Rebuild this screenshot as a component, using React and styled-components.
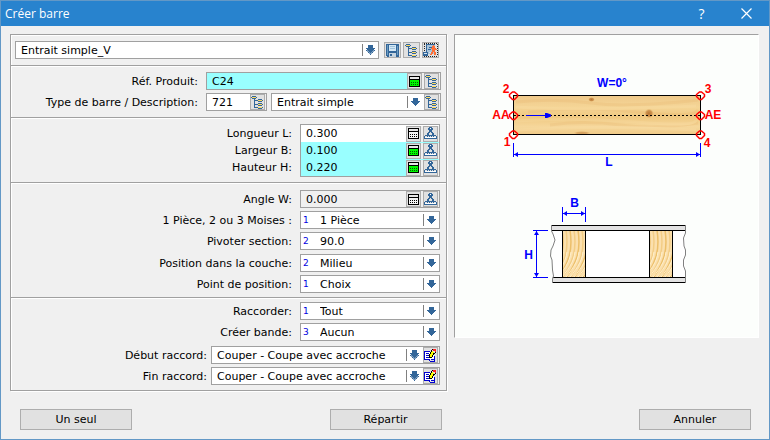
import React from "react";
import styled, { createGlobalStyle, css } from "styled-components";

const LINE = "#a0a0a0";
const FACE = "#f0f0f0";
const CYAN = "#99ffff";
const STEEL = "#336699";

const GlobalStyle = createGlobalStyle`
  *, *::before, *::after { box-sizing: border-box; }
  body { margin: 0; background: ${FACE}; }
  body, button, input, select {
    font-family: "DejaVu Sans", Verdana, sans-serif;
    font-size: 11px;
    color: #000;
  }
`;

const Dialog = styled.main`
  min-height: 100vh;
  display: flex;
  flex-direction: column;
  background: ${FACE};
  border: 1px solid #6398c6;
`;

const TitleBar = styled.header`
  height: 25px;
  display: flex;
  align-items: center;
  padding-left: 4px;
  background: #2883ce;
  color: #fff;
`;

const Title = styled.h1`
  flex: 1;
  margin: 0;
  font: 400 12px/24px "Open Sans", "Segoe UI", sans-serif;
`;

const CaptionButton = styled.button`
  width: 45px;
  height: 25px;
  padding: 0;
  border: 0;
  background: transparent;
  color: #fff;
  display: grid;
  place-items: center;
  font: 400 14px/24px "Open Sans", "Segoe UI", sans-serif;
`;

const Content = styled.div`
  display: grid;
  grid-template-columns: minmax(0, 437fr) minmax(0, 305fr);
  column-gap: 7px;
  align-items: start;
  padding: 8px 10px 0 9px;
`;

const Form = styled.form`
  border: 1px solid ${LINE};
  border-bottom: 0;
  box-shadow: 1px 1px 0 #fff;
`;

const Section = styled.section`
  display: flex;
  flex-direction: column;
  gap: 3px;
  padding: ${(p) => p.$pad};
  border-bottom: 1px solid ${LINE};
  box-shadow: inset 1px 1px 0 #fff;
`;

const Group = styled.div`
  display: flex;
  flex-direction: column;
  gap: 3px;
  margin-top: ${(p) => p.$space || 0}px;
`;

const Row = styled.div`
  display: flex;
  align-items: center;

  > label {
    padding-top: 2px;
  }
`;

const Label = styled.label`
  flex: 1;
  padding-right: ${(p) => (p.$tight ? 4 : 8)}px;
  text-align: right;
  line-height: 16px;
  white-space: nowrap;
`;

const control = css`
  flex: 1;
  min-width: 0;
  width: 0;
  height: 16px;
  margin: 0;
  padding: 0 0 0 ${(p) => (p.$indent === undefined ? 5 : p.$indent)}px;
  border: 0;
  border-radius: 0;
  outline: 0;
  background: transparent;
`;

const TextInput = styled.input`
  ${control}
`;

const Select = styled.select`
  ${control}
  appearance: none;
`;

const Frame = styled.div`
  display: flex;
  align-items: center;
  height: 18px;
  border: 1px solid ${LINE};
  background: ${(p) => p.$fill || "#fff"};
  ${(p) => (p.$width ? css`flex: none; width: ${p.$width}px;` : css`flex: 1; min-width: 0;`)}

  ${TextInput}, ${Select} {
    padding-top: 1px;
  }
`;

const Stack = styled.div`
  width: 140px;
  border: 1px solid ${LINE};
`;

const StackRow = styled.div`
  display: flex;
  align-items: center;
  height: 17px;
  background: ${(p) => p.$fill || "#fff"};
`;

const StackLabels = styled.div`
  flex: 1;
  display: flex;
  flex-direction: column;
  gap: 1px;
`;

const Pair = styled.div`
  display: flex;
  gap: 4px;
  width: 235px;
`;

const Code = styled.span`
  width: 19px;
  padding-left: 2px;
  color: #0000e0;
  font-size: 9px;
  line-height: 14px;
`;

const ArrowCell = styled.span`
  flex: none;
  width: 16px;
  height: 12px;
  padding: 0 3px;
  border-left: 1px solid #808080;
  display: flex;
  align-items: center;
  pointer-events: none;
`;

const Tools = styled.span`
  flex: none;
  display: flex;
  align-items: center;
  gap: 2px;
  height: 16px;
  padding-right: 1px;
  margin-left: 1px;
  background: ${FACE};
`;

const Toolbar = styled.div`
  display: flex;
  gap: 2px;
  margin-left: 5px;
`;

const ToolButton = styled.button`
  flex: none;
  width: ${(p) => (p.$large ? 17 : 15)}px;
  height: 16px;
  padding: 0;
  border: 1px solid #adadad;
  background: #e1e1e1;
  display: grid;
  place-items: center;
  svg { display: block; }
`;

const Preview = styled.figure`
  margin: 0;
  border: 1px solid #fff;
  border-top-color: ${LINE};
  border-left-color: ${LINE};
  background: #fcfefc;
  svg { display: block; width: 100%; height: auto; }
`;

const Footer = styled.footer`
  display: flex;
  justify-content: space-between;
  padding: 18px 18px 9px 19px;
`;

const PushButton = styled.button`
  width: 112px;
  height: 21px;
  padding: 0;
  border: 1px solid #adadad;
  background: #e1e1e1;
`;

function Pixels({ size = 13, h, children }) {
  return (
    <svg width={size} height={h || size} viewBox={`0 0 ${size} ${h || size}`} shapeRendering="crispEdges" aria-hidden="true">
      {children}
    </svg>
  );
}

const Arrow = ({ double }) => (
  <ArrowCell>
    <Pixels size={9} h={10}>
      {double ? (
        <>
          <path fill="#7fa0c0" d="M0 5h9v1H8v1H7v1H6v1H5v1H4V9H3V8H2V7H1V6H0z" />
          <path fill={STEEL} d="M2 0h5v3h2v1H8v1H7v1H6v1H5v1H4V7H3V6H2V5H1V4H0V3h2z" />
          <path fill={STEEL} d="M0 5h1v1H0zM8 5h1v1H8zM2 7h1v1H2zM6 7h1v1H6zM4 9h1v1H4z" />
        </>
      ) : (
        <path fill={STEEL} d="M2 1h5v3h2v1H8v1H7v1H6v1H5v1H4V8H3V7H2V6H1V5H0V4h2z" />
      )}
    </Pixels>
  </ArrowCell>
);

const TreeIcon = () => (
  <Pixels>
    <path fill={STEEL} d="M1 0h4v1H1zM0 1h1v1H0zM5 1h1v1H5zM1 2h4v1H1zM3 3h1v9H3zM4 4h3v1H4zM4 8h3v1H4zM4 11h3v1H4zM7 3h4v1H7zM11 4h1v1h-1zM7 5h4v1H7zM7 7h4v1H7zM11 8h1v1h-1zM7 9h4v1H7zM11 11h1v1h-1zM7 12h4v1H7z" />
    <path fill="#ffd95c" d="M1 1h4v1H1zM7 4h4v1H7zM7 8h4v1H7zM7 11h4v1H7z" />
  </Pixels>
);

const CalcIcon = ({ on }) => (
  <Pixels>
    <path d="M1 1h11v11H1z" fill="#000" />
    <path d="M2 2h9v2H2z" fill="#e8e8e8" />
    <path d="M2 5h9v6H2z" fill={on ? "#00f800" : "#f4f4f4"} />
    <path
      d="M3 7h1v1H3zM5 7h1v1H5zM7 7h1v1H7zM9 7h1v1H9zM3 9h1v1H3zM5 9h1v1H5zM7 9h1v1H7zM9 9h1v1H9z"
      fill={on ? "#006000" : "#000"}
    />
  </Pixels>
);

const CompassIcon = () => (
  <Pixels>
    <path fill={STEEL} d="M5 0h3v1H5zM4 1h5v2H4zM5 3h3v1H5zM5 4h3v1H5zM4 5h2v1H4zM7 5h2v1H7zM3 6h2v1H3zM8 6h2v1H8zM3 7h2v1H3zM8 7h2v1H8zM1 8h11v1H1zM0 9h1v3H0zM12 9h1v3h-1zM1 11h11v1H1zM3 9h1v1H3zM5 9h1v1H5zM7 9h1v1H7zM9 9h1v1H9z" />
    <path fill="#fff" d="M1 10h11v1H1zM6 1h1v1H6z" />
  </Pixels>
);

const SaveIcon = () => (
  <Pixels>
    <path fill={STEEL} d="M0 0h12l1 1v12H1l-1-1z" />
    <path fill="#d5e8f5" d="M3 1h7v6H3z" />
    <path fill="#9fc3dc" d="M4 2h5v1H4zM4 4h5v1H4z" />
    <path fill="#c5d4e0" d="M3 9h7v4H3z" />
    <path fill={STEEL} d="M4 10h2v2H4z" />
    <path fill="#6d9cc0" d="M1 1h1v10H1zM11 2h1v9h-1z" />
  </Pixels>
);

const ExportIcon = () => (
  <Pixels size={15} h={14}>
    <path fill="none" stroke="#222" strokeDasharray="1 1" d="M1 .5h13M1.500 1v12M14.500 1v12M1 13.500h13" />
    <path fill="#a9c3d8" d="M3 1h9v10H3z" />
    <path fill={STEEL} d="M3 1h9v1H3zM3 2h1v8H3zM0 9h5v4H0zM6 4h4v1H6zM5 6h3v1H5z" />
    <path fill="#d5e3ee" d="M1 10h3v1H1zM6 9h2v1H6z" />
    <path fill="#ff6f35" d="M10 2h1v1h1v2h1v1h1v1h-2v2h1v3h-2V9h-1v2H9v1H7v-1h1V9h1V6H8V5h1V3h1z" />
  </Pixels>
);

const EditIcon = () => (
  <Pixels>
    <path fill="#fff" d="M0 3h10v8H0z" />
    <path fill="#0000d0" d="M0 2h6v1H0zM0 2h1v9H0zM2 4h3v1H2zM2 6h3v1H2zM2 8h3v1H2zM0 10h6v1H0zM5 11h1v1H5zM6 12h5v1H6zM10 7h1v6h-1zM7 10h3v1H7z" />
    <path fill="#000" d="M8 0h3v1H8zM7 1h1v2H7zM6 3h1v2H6zM5 5h1v4H5zM6 8h2v1H6zM8 6h1v2H8zM9 4h1v2H9zM11 3h1v1h-1zM10 4h1v1h-1z" />
    <path fill="#ffff00" d="M8 2h1v1h1v1H9v2H8v2H6V5h1V3h1z" />
    <path fill="#ff2020" d="M9 0h3v3h-1V2H9z" />
  </Pixels>
);

const Tree = () => (
  <ToolButton type="button" aria-label="Sélection"><TreeIcon /></ToolButton>
);

const CalcTools = ({ on }) => (
  <Tools>
    <ToolButton type="button" aria-label="Calculatrice"><CalcIcon on={on} /></ToolButton>
    <ToolButton type="button" aria-label="Mesurer"><CompassIcon /></ToolButton>
  </Tools>
);

function ChoiceRow({ id, label, code, value }) {
  return (
    <Row>
      <Label htmlFor={id}>{label}</Label>
      <Frame $width={140}>
        <Code>{code}</Code>
        <Select id={id} $indent={0}><option>{value}</option></Select>
        <Arrow />
      </Frame>
    </Row>
  );
}

function JointRow({ id, label }) {
  return (
    <Row>
      <Label htmlFor={id} $tight>{label}</Label>
      <Frame $width={229}>
        <Select id={id}><option>Couper - Coupe avec accroche</option></Select>
        <Arrow double />
        <Tools>
          <ToolButton type="button" aria-label="Modifier"><EditIcon /></ToolButton>
        </Tools>
      </Frame>
    </Row>
  );
}

const DIMENSIONS = [
  { id: "longueur", label: "Longueur L:", value: "0.300", on: false },
  { id: "largeur", label: "Largeur B:", value: "0.100", on: true },
  { id: "hauteur", label: "Hauteur H:", value: "0.220", on: true },
];

const NODES = [
  [513, 95], [700, 95], [513, 115], [700, 115], [513, 134], [700, 134],
];

const DrawingText = styled.text`
  font: 700 12px "Liberation Sans", Arial, sans-serif;
  fill: ${(p) => p.$color || "#0000ff"};
  text-anchor: middle;
`;

function Post({ x }) {
  return (
    <g>
      <rect x={x + 0.5} y="230.500" width="23" height="47" fill="#fbe0ae" />
      <g clipPath={`url(#post${x})`} fill="none">
        {Array.from({ length: 15 }, (_, i) => (
          <path
            key={i}
            d={`M${x - 12 + i * 4} 230C${x - 9 + i * 4} 250 ${x - 12 + i * 4} 262 ${x - 28 + i * 4} 284`}
            stroke={i % 2 ? "#ecbf6a" : "#f3cd86"}
            strokeWidth="1.500"
          />
        ))}
        {Array.from({ length: 12 }, (_, i) => (
          <path
            key={i}
            d={`M${x + 1 + i * 4} 252C${x + i * 4} 262 ${x - 6 + i * 4} 270 ${x - 16 + i * 4} 282`}
            stroke="#fff0cc"
          />
        ))}
      </g>
      <path d={`M${x + 0.5} 230V278M${x + 23.5} 230V278`} stroke="#000" shapeRendering="crispEdges" />
      <clipPath id={`post${x}`}><rect x={x} y="230" width="24" height="48" /></clipPath>
    </g>
  );
}

function BeamDrawing() {
  return (
    <svg viewBox="455 35 303 302" role="img" aria-label="Schéma de la barre">
      <defs>
        <linearGradient id="wood" x1="0" y1="0" x2="0" y2="1">
          <stop offset="0" stopColor="#efc98a" />
          <stop offset=".3" stopColor="#f5d596" />
          <stop offset=".55" stopColor="#efc880" />
          <stop offset=".8" stopColor="#f6d79b" />
          <stop offset="1" stopColor="#f0cb88" />
        </linearGradient>
        <radialGradient id="knot">
          <stop offset="0" stopColor="#b97835" />
          <stop offset=".6" stopColor="#cf9551" />
          <stop offset="1" stopColor="#efc880" stopOpacity="0" />
        </radialGradient>
      </defs>

      <rect x="513.500" y="95.500" width="187" height="39" fill="url(#wood)" />
      <g fill="none" strokeWidth="3" opacity=".18">
        <path stroke="#e3ab61" d="M516 102q40-4 75 1t107-3M528 112q55-6 110 0t60-2M550 125q35-5 70 0t78-2" />
        <path stroke="#ffe7b5" d="M516 107q60 4 180-1M516 121q60-4 120 1t60-2M516 130q80-5 180 0" />
      </g>
      <ellipse cx="591.500" cy="99.500" rx="3.500" ry="2.500" fill="url(#knot)" />
      <ellipse cx="649" cy="113.500" rx="5" ry="5" fill="url(#knot)" />
      <ellipse cx="582" cy="133" rx="9" ry="2" fill="url(#knot)" opacity=".6" />
      <g stroke="#000" fill="none" shapeRendering="crispEdges">
        <rect x="513.500" y="95.500" width="187" height="39" />
        <path d="M514 115.500H526M550 115.500H700" strokeDasharray="2 2" />
      </g>
      <path d="M526 115.500H546" stroke="#0000ff" shapeRendering="crispEdges" />
      <path d="M545 113h2l4 1.500v2l-4 1.500h-2z" fill="#0000ff" />
      <g fill="none" stroke="#ff0000" strokeWidth="1.500">
        {NODES.map(([x, y]) => (
          <path key={`${x}-${y}`} d={`M${x - 0.5} ${y - 3}h2l3 2.500v2l-3 3h-2l-3-3v-2z`} />
        ))}
      </g>
      <g stroke="#0000ff" shapeRendering="crispEdges">
        <path d="M513.500 143V157M700.500 143V157M514 154.500H700" />
        <path d="M562.500 207V222M585.500 207V222M563 213.500H585" />
        <path d="M533 230.500H548M533 277.500H548M536.500 231V277" />
      </g>
      <g fill="#0000ff">
        <path d="M514 154.500l4-2.500v5zM700 154.500l-4-2.500v5z" />
        <path d="M563 213.500l4-2.500v5zM585 213.500l-4-2.500v5z" />
        <path d="M536.500 231l-2.500 4h5zM536.500 277l-2.500-4h5z" />
      </g>
      <DrawingText x="612" y="87">W=0°</DrawingText>
      <DrawingText x="609" y="166">L</DrawingText>
      <DrawingText x="574.500" y="207">B</DrawingText>
      <DrawingText x="528.500" y="259">H</DrawingText>
      <DrawingText $color="#ff0000" x="506" y="93">2</DrawingText>
      <DrawingText $color="#ff0000" x="708" y="93">3</DrawingText>
      <DrawingText $color="#ff0000" x="501" y="119">AA</DrawingText>
      <DrawingText $color="#ff0000" x="713" y="119">AE</DrawingText>
      <DrawingText $color="#ff0000" x="507" y="146">1</DrawingText>
      <DrawingText $color="#ff0000" x="707" y="147">4</DrawingText>

      <path fill="#fff" d="M552 230h133v47H552z" />
      <Post x={562} />
      <Post x={649} />
      <g shapeRendering="crispEdges">
        <path fill="#e2e2e2" d="M551 225h135v6H551zM552 277h134v6H552z" />
        <path fill="none" stroke="#000" d="M551 225.500H686M551 230.500H686M553 277.500H686M552 282.500H686" />
      </g>
      <path fill="none" stroke="#808080" d="M551.500 225v6l1.500 3 2 6-2 6-2 4-.5 6 1.500 4 .5 10 1 6-1 3v4M685.500 225v8l-2 5 .5 8 1.500 4v5l-2 5v6l2 5v12" />
    </svg>
  );
}

export default function App() {
  return (
    <>
      <GlobalStyle />
      <Dialog>
        <TitleBar>
          <Title>Créer barre</Title>
          <CaptionButton type="button" aria-label="Aide">?</CaptionButton>
          <CaptionButton type="button" aria-label="Fermer">
            <svg width="11" height="11" viewBox="0 0 11 11" aria-hidden="true">
              <path d="M.5.5l10 10M10.500.5l-10 10" stroke="#fff" strokeWidth="1.200" />
            </svg>
          </CaptionButton>
        </TitleBar>

        <Content>
          <Form>
            <Section $pad="6px 7px 6px 4px">
              <Row>
                <Frame>
                  <Select aria-label="Modèle"><option>Entrait simple_V</option></Select>
                  <Arrow double />
                </Frame>
                <Toolbar>
                  <ToolButton $large type="button" aria-label="Enregistrer"><SaveIcon /></ToolButton>
                  <ToolButton $large type="button" aria-label="Sélection"><TreeIcon /></ToolButton>
                  <ToolButton $large type="button" aria-label="Transférer"><ExportIcon /></ToolButton>
                </Toolbar>
              </Row>
            </Section>

            <Section $pad="6px 5px 6px 4px">
              <Row>
                <Label htmlFor="produit">Réf. Produit:</Label>
                <Frame $width={235} $fill={CYAN}>
                  <TextInput id="produit" defaultValue="C24" />
                  <Tools>
                    <ToolButton type="button" aria-label="Calculatrice"><CalcIcon on /></ToolButton>
                    <Tree />
                  </Tools>
                </Frame>
              </Row>
              <Row>
                <Label htmlFor="type">Type de barre / Description:</Label>
                <Pair>
                  <Frame $width={61}>
                    <TextInput id="type" defaultValue="721" />
                    <Tools><Tree /></Tools>
                  </Frame>
                  <Frame>
                    <Select aria-label="Description"><option>Entrait simple</option></Select>
                    <Arrow />
                    <Tools><Tree /></Tools>
                  </Frame>
                </Pair>
              </Row>
            </Section>

            <Section $pad="6px 6px 5px 4px">
              <Row>
                <StackLabels>
                  {DIMENSIONS.map((d) => (
                    <Label key={d.id} htmlFor={d.id}>{d.label}</Label>
                  ))}
                </StackLabels>
                <Stack>
                  {DIMENSIONS.map((d) => (
                    <StackRow key={d.id} $fill={d.on ? CYAN : undefined}>
                      <TextInput id={d.id} defaultValue={d.value} />
                      <CalcTools on={d.on} />
                    </StackRow>
                  ))}
                </Stack>
              </Row>
            </Section>

            <Section $pad="7px 6px 4px 4px">
              <Row>
                <Label htmlFor="angle">Angle W:</Label>
                <Frame $width={140} $fill={FACE}>
                  <TextInput id="angle" defaultValue="0.000" />
                  <CalcTools />
                </Frame>
              </Row>
              <ChoiceRow id="moises" label="1 Pièce, 2 ou 3 Moises :" code="1" value="1 Pièce" />
              <ChoiceRow id="pivoter" label="Pivoter section:" code="2" value="90.0" />
              <Group $space={1}>
                <ChoiceRow id="couche" label="Position dans la couche:" code="2" value="Milieu" />
                <ChoiceRow id="point" label="Point de position:" code="1" value="Choix" />
              </Group>
            </Section>

            <Section $pad="4px 6px 5px 4px">
              <ChoiceRow id="raccorder" label="Raccorder:" code="1" value="Tout" />
              <ChoiceRow id="bande" label="Créer bande:" code="3" value="Aucun" />
              <Group $space={2}>
                <JointRow id="debut" label="Début raccord:" />
                <JointRow id="fin" label="Fin raccord:" />
              </Group>
            </Section>
          </Form>

          <Preview><BeamDrawing /></Preview>
        </Content>

        <Footer>
          <PushButton type="button">Un seul</PushButton>
          <PushButton type="button">Répartir</PushButton>
          <PushButton type="button">Annuler</PushButton>
        </Footer>
      </Dialog>
    </>
  );
}
